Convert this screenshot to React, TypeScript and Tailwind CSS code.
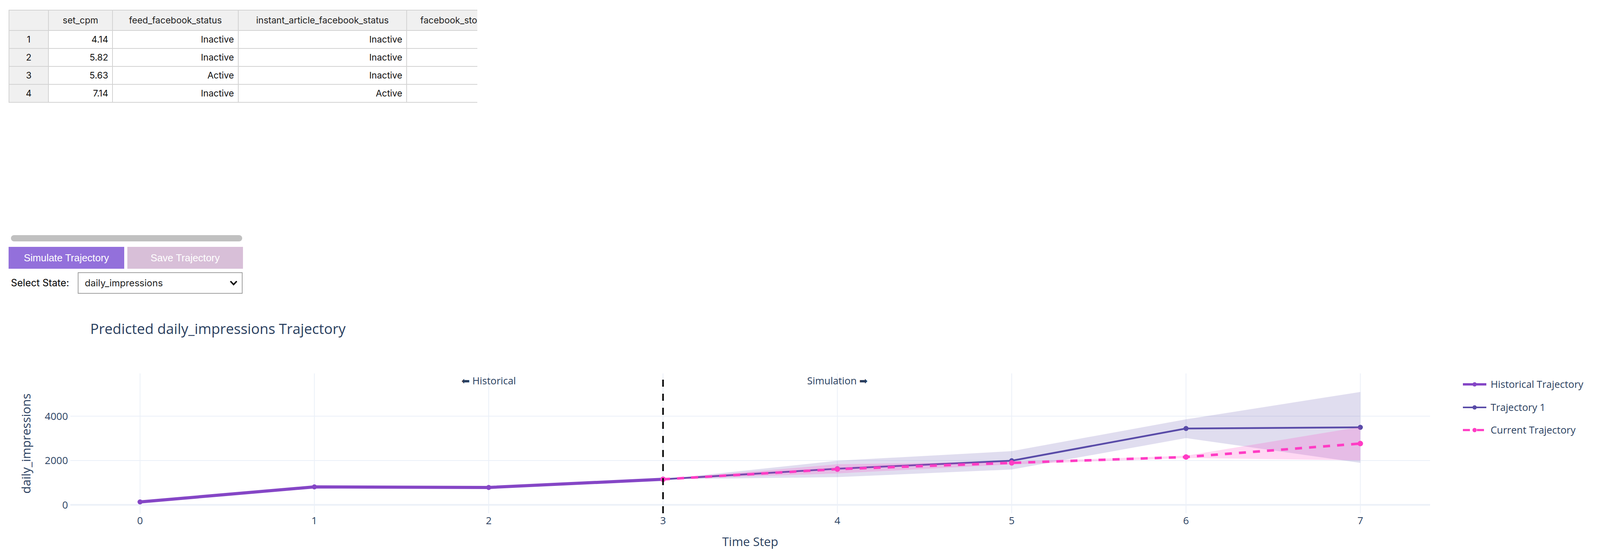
import React, { useEffect, useState } from "react";

const hist = [1285, 1246.5, 1248, 1227];
const traj1 = [1227, 1200, 1179.5, 1097, 1094];
const cur = [1227, 1201, 1185, 1170, 1135.6];
const t1Up = [1227, 1179.5, 1155, 1073.5, 1003.4];
const t1Lo = [1227, 1221.5, 1202, 1121.5, 1185];
const cUp = [1227, 1188.6, 1182, 1166.8, 1093];
const cLo = [1227, 1212, 1189, 1172.5, 1178.5];

const rows = [
  ["1", "4.14", "Inactive", "Inactive"],
  ["2", "5.82", "Inactive", "Inactive"],
  ["3", "5.63", "Active", "Inactive"],
  ["4", "7.14", "Inactive", "Active"],
];

const inter = { fontFamily: "Inter, 'Noto Sans', sans-serif" };
const OS = "'Open Sans', verdana, arial, sans-serif";
const ARROW = "'DejaVu Sans', sans-serif";
const axisColor = "#2a3f5f";
const HIST = "#8546c6";
const T1 = "#594ba8";
const CUR = "#ff3cc4";

function useWidth() {
  const get = () =>
    typeof document !== "undefined" ? document.documentElement.clientWidth || window.innerWidth : 4294;
  const [w, setW] = useState<number>(get());
  useEffect(() => {
    const f = () => setW(get());
    f();
    window.addEventListener("resize", f);
    return () => window.removeEventListener("resize", f);
  }, []);
  return w;
}

function Chart({ W }: { W: number }) {
  const plotL = 180;
  const plotR = W - 435;
  const unit = (plotR - plotL) / 7.8;
  const X = (i: number) => plotL + (i + 0.4) * unit;
  const pts = (ys: number[], start: number) => ys.map((y, k) => `${X(start + k)},${y}`).join(" ");
  const band = (up: number[], lo: number[]) =>
    up.map((y, k) => `${X(3 + k)},${y}`).join(" ") +
    " " +
    lo
      .map((y, k) => `${X(3 + k)},${y}`)
      .reverse()
      .join(" ");
  const LX = W - 351;

  return (
    <svg width={W} height={666} className="block">
      <g transform="translate(0,-760)">
        <text x={231} y={855} fontFamily={OS} fontSize={36.5} fill={axisColor}>
          Predicted daily_impressions Trajectory
        </text>
        {[0, 1, 2, 3, 4, 5, 6, 7].map((i) => (
          <line key={i} x1={X(i)} x2={X(i)} y1={956} y2={1314} stroke="#ebf0f8" strokeWidth={2} />
        ))}
        {[1065.6, 1179.1].map((y) => (
          <line key={y} x1={plotL} x2={plotR} y1={y} y2={y} stroke="#ebf0f8" strokeWidth={2} />
        ))}
        <line x1={plotL} x2={plotR} y1={1292.6} y2={1292.6} stroke="#ebf0f8" strokeWidth={4} />
        {(
          [
            ["4000", 1065.6],
            ["2000", 1179.1],
            ["0", 1292.6],
          ] as [string, number][]
        ).map(([t, y]) => (
          <text key={t} x={174} y={y + 9} textAnchor="end" fontFamily={OS} fontSize={26} fill={axisColor}>
            {t}
          </text>
        ))}
        {[0, 1, 2, 3, 4, 5, 6, 7].map((i) => (
          <text key={i} x={X(i)} y={1342} textAnchor="middle" fontFamily={OS} fontSize={26} fill={axisColor}>
            {i}
          </text>
        ))}
        <text x={(plotL + plotR) / 2} y={1398} textAnchor="middle" fontFamily={OS} fontSize={31} fill={axisColor}>
          Time Step
        </text>
        <text
          x={0}
          y={0}
          transform="translate(78,1135.5) rotate(-90)"
          textAnchor="middle"
          fontFamily={OS}
          fontSize={31}
          fill={axisColor}
        >
          daily_impressions
        </text>

        <polyline points={pts(hist, 0)} fill="none" stroke={HIST} strokeWidth={8} strokeLinejoin="round" />
        {hist.map((y, k) => (
          <circle key={k} cx={X(k)} cy={y} r={6.5} fill={HIST} />
        ))}

        <polygon points={band(t1Up, t1Lo)} fill="rgba(89,75,168,0.19)" />
        <polyline points={pts(traj1, 3)} fill="none" stroke={T1} strokeWidth={4.5} strokeLinejoin="round" />
        {traj1.map((y, k) => (
          <circle key={k} cx={X(3 + k)} cy={y} r={6.5} fill={T1} />
        ))}

        <polygon points={band(cUp, cLo)} fill="rgba(255,60,196,0.2)" />
        <polyline
          points={pts(cur, 3)}
          fill="none"
          stroke={CUR}
          strokeWidth={6.5}
          strokeDasharray="18 18"
          strokeLinejoin="round"
        />
        {cur.map((y, k) => (
          <circle key={k} cx={X(3 + k)} cy={y} r={7} fill={CUR} />
        ))}

        <line x1={X(3)} x2={X(3)} y1={1314} y2={956} stroke="#000" strokeWidth={4} strokeDasharray="18 18" />

        <text x={X(2)} y={984} textAnchor="middle" fontFamily={OS} fontSize={25.5} fill={axisColor}>
          <tspan fontFamily={ARROW}>⬅</tspan> Historical
        </text>
        <text x={X(4)} y={984} textAnchor="middle" fontFamily={OS} fontSize={25.5} fill={axisColor}>
          Simulation <tspan fontFamily={ARROW}>➡</tspan>
        </text>

        <g>
          <line x1={LX} x2={LX + 60} y1={984} y2={984} stroke={HIST} strokeWidth={6} />
          <circle cx={LX + 30} cy={984} r={5.5} fill={HIST} />
          <text x={LX + 71} y={993} fontFamily={OS} fontSize={25.5} fill={axisColor}>
            Historical Trajectory
          </text>

          <line x1={LX} x2={LX + 60} y1={1043} y2={1043} stroke={T1} strokeWidth={4} />
          <circle cx={LX + 30} cy={1043} r={5.5} fill={T1} />
          <text x={LX + 71} y={1052} fontFamily={OS} fontSize={25.5} fill={axisColor}>
            Trajectory 1
          </text>

          <line
            x1={LX}
            x2={LX + 60}
            y1={1101}
            y2={1101}
            stroke={CUR}
            strokeWidth={5.5}
            strokeDasharray="18 18"
          />
          <circle cx={LX + 30} cy={1101} r={5.5} fill={CUR} />
          <text x={LX + 71} y={1110} fontFamily={OS} fontSize={25.5} fill={axisColor}>
            Current Trajectory
          </text>
        </g>
      </g>
    </svg>
  );
}

export default function App() {
  const W = useWidth();
  return (
    <div className="w-full h-[1426px] bg-white overflow-hidden">
      <div className="pt-[25px] pl-[22px]">
        <div className="w-[1200px] overflow-hidden">
          <table className="table-fixed border-collapse text-[23px] text-[#111]" style={{ ...inter, width: 1560 }}>
            <colgroup>
              <col className="w-[101px]" />
              <col className="w-[164px]" />
              <col className="w-[322px]" />
              <col className="w-[431px]" />
              <col className="w-[542px]" />
            </colgroup>
            <thead>
              <tr className="h-[52px] bg-[#f0f0f0]">
                <th className="border-2 border-[#d3d3d3] font-normal"></th>
                <th className="border-2 border-[#d3d3d3] font-normal text-center text-[#222]">set_cpm</th>
                <th className="border-2 border-[#d3d3d3] font-normal text-center text-[#222]">feed_facebook_status</th>
                <th className="border-2 border-[#d3d3d3] font-normal text-center text-[#222]">
                  instant_article_facebook_status
                </th>
                <th className="border-2 border-[#d3d3d3] font-normal text-left pl-[34px] text-[#222] whitespace-nowrap">
                  facebook_stories_status
                </th>
              </tr>
            </thead>
            <tbody>
              {rows.map((r) => (
                <tr key={r[0]} className="h-[46px]">
                  <td className="border-2 border-[#d3d3d3] bg-[#f0f0f0] text-center">{r[0]}</td>
                  <td className="border-2 border-[#d3d3d3] text-right pr-[10px]">{r[1]}</td>
                  <td className="border-2 border-[#d3d3d3] text-right pr-[10px]">{r[2]}</td>
                  <td className="border-2 border-[#d3d3d3] text-right pr-[10px]">{r[3]}</td>
                  <td className="border-2 border-[#d3d3d3]"></td>
                </tr>
              ))}
            </tbody>
          </table>
        </div>

        <div className="mt-[339px] ml-[6px] w-[592px] h-[16px] rounded-full bg-[#c0c0c0]" />

        <div className="mt-[14px] flex gap-[8px]" style={{ fontFamily: "'Liberation Sans', Arial, sans-serif" }}>
          <button className="w-[296px] h-[56px] bg-[#9370db] text-white text-[25.5px]">Simulate Trajectory</button>
          <button className="w-[296px] h-[56px] bg-[#d8bfd8] text-white text-[25.5px]">Save Trajectory</button>
        </div>

        <div className="mt-[9px] flex items-center" style={inter}>
          <span className="ml-[6px] w-[171px] text-[25px] text-black">Select State:</span>
          <div className="w-[422px] h-[55px] border-2 border-[#a0a0a0] bg-white flex items-center justify-between pl-[16px] pr-[11px]">
            <span className="text-[24px] text-[#222]">daily_impressions</span>
            <svg width="20" height="13" viewBox="0 0 20 13">
              <polyline points="2,2 10,10.5 18,2" fill="none" stroke="#000" strokeWidth="3.6" />
            </svg>
          </div>
        </div>
      </div>

      <div className="mt-[8px]">
        <Chart W={W} />
      </div>
    </div>
  );
}
